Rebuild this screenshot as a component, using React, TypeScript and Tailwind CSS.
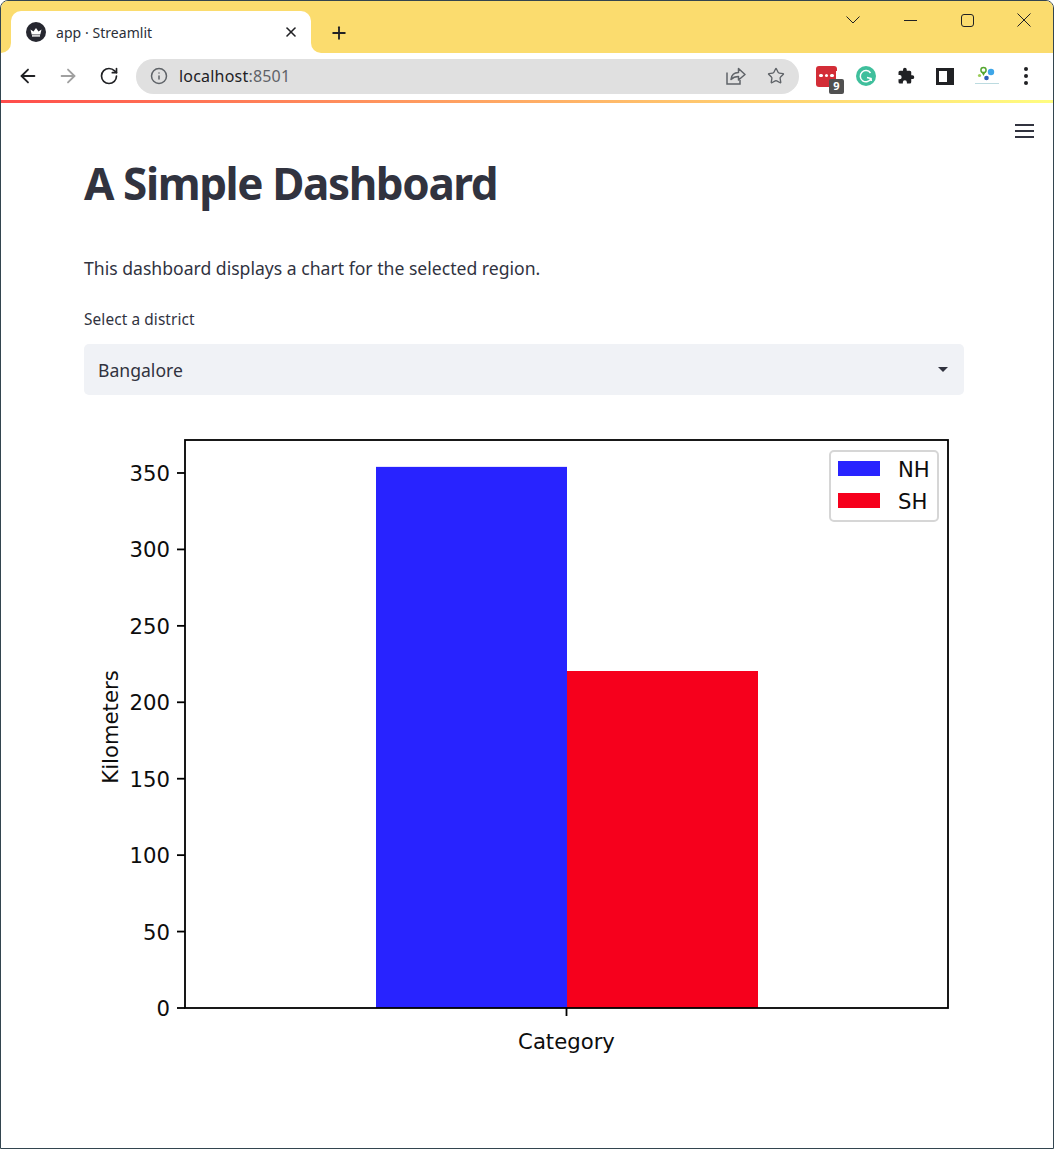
import { ArrowLeft, ArrowRight, RotateCw, Info, Star, X, Plus } from "lucide-react";

const TICKS = [0, 50, 100, 150, 200, 250, 300, 350];
const PLOT = { left: 185, right: 948, top: 440, bottom: 1008 };
const PX_PER_KM = 1.5286;

const yFor = (km: number) => PLOT.bottom - km * PX_PER_KM;

function CrownIcon() {
  return (
    <svg width="20" height="20" viewBox="0 0 20 20">
      <circle cx="10" cy="10" r="10" fill="#262730" />
      <path d="M4.5 7.5 L7.5 9.5 L10 6 L12.5 9.5 L15.5 7.5 L14.3 12.6 H5.7 Z" fill="#fff" />
      <rect x="6" y="13.2" width="8" height="1.4" fill="#fff" />
    </svg>
  );
}

function TabStrip() {
  return (
    <div className="flex h-[52px] bg-[#fbdc6e] shrink-0">
      <div className="relative ml-[10px] mt-[10px] flex h-[42px] w-[300px] items-center rounded-t-[10px] bg-white pl-[15px] pr-[12px]">
        <span className="absolute bottom-0 left-[-10px] h-[10px] w-[10px] bg-white">
          <span className="block h-full w-full rounded-br-[10px] bg-[#fbdc6e]" />
        </span>
        <span className="absolute bottom-0 right-[-10px] h-[10px] w-[10px] bg-white">
          <span className="block h-full w-full rounded-bl-[10px] bg-[#fbdc6e]" />
        </span>
        <CrownIcon />
        <span className="ml-[10px] flex-1 text-[14px] tracking-[0.05px] text-[#2b2f38] font-['Noto_Sans',sans-serif]">app · Streamlit</span>
        <X size={16} strokeWidth={2.4} className="text-[#202124]" />
      </div>
      <div className="ml-[18px] mt-[11px] flex h-[42px] items-center">
        <Plus size={20} strokeWidth={2.2} className="text-[#202124]" />
      </div>
      <div className="flex-1" />
      <div className="flex h-[38px] items-center text-[#202124]">
        <svg width="14" height="8" viewBox="0 0 14 8" className="mr-[44px]">
          <path d="M0.5 0.5 L7 7 L13.5 0.5" fill="none" stroke="#202124" strokeWidth="1" />
        </svg>
        <div className="mr-[44px] h-px w-[13px] bg-[#202124]" />
        <div className="mr-[43px] h-[13px] w-[13px] rounded-[3px] border border-[#202124]" />
        <svg width="14" height="14" viewBox="0 0 14 14" className="mr-[22px]">
          <path d="M0.5 0.5 L13.5 13.5 M13.5 0.5 L0.5 13.5" stroke="#202124" strokeWidth="1" />
        </svg>
      </div>
    </div>
  );
}

function ShareIcon() {
  return (
    <svg width="20" height="18" viewBox="0 0 20 18" fill="none" stroke="#5f6368" strokeWidth="1.5">
      <path d="M1 5.5 V17 H14 V13" />
      <path d="M5 12.5 C5.5 8 8.5 5.5 12.5 5.5 V1.5 L19 7.5 L12.5 13 V9.5 C9.5 9.5 7 10.3 5 12.5 Z" strokeLinejoin="round" />
    </svg>
  );
}

function LastPassIcon() {
  return (
    <div className="relative h-[21px] w-[21px] rounded-[3px] bg-[#d32d37]">
      <div className="flex h-full items-center gap-[2px] pl-[3px] pb-[1px]">
        <span className="h-[3.5px] w-[3.5px] rounded-full bg-white" />
        <span className="h-[3.5px] w-[3.5px] rounded-full bg-white" />
        <span className="h-[3.5px] w-[3.5px] rounded-full bg-white" />
        <span className="h-[9px] w-px bg-white" />
      </div>
      <span className="absolute left-[13px] top-[13px] flex h-[15px] w-[15px] items-center justify-center rounded-[2px] bg-[#505050] text-[11px] font-bold text-white font-['Noto_Sans',sans-serif]">9</span>
    </div>
  );
}

function GrammarlyIcon() {
  return (
    <svg width="20" height="20" viewBox="0 0 20 20">
      <circle cx="10" cy="10" r="10" fill="#3fbf9c" />
      <path d="M14.5 7 A5.6 5.6 0 1 0 15 12.5 L11 11.5 M15 12.5 L15.4 15" fill="none" stroke="#fff" strokeWidth="1.5" />
    </svg>
  );
}

function PuzzleIcon() {
  return (
    <svg width="18" height="18" viewBox="0 0 24 24">
      <path
        d="M20.5 11H19V7a2 2 0 0 0-2-2h-4V3.5a2.5 2.5 0 0 0-5 0V5H4a2 2 0 0 0-2 2v3.8h1.5a2.7 2.7 0 0 1 0 5.4H2V20a2 2 0 0 0 2 2h3.8v-1.5a2.7 2.7 0 0 1 5.4 0V22H17a2 2 0 0 0 2-2v-4h1.5a2.5 2.5 0 0 0 0-5z"
        fill="#202124"
      />
    </svg>
  );
}

function TinyLogo() {
  return (
    <svg width="26" height="22" viewBox="0 0 26 22">
      <circle cx="9.5" cy="5" r="2.6" fill="none" stroke="#55a630" strokeWidth="1.5" />
      <path d="M7.4 7 L9.5 11 L11.6 7" fill="#55a630" />
      <circle cx="17" cy="7" r="3.2" fill="#3ea6e8" />
      <circle cx="5.5" cy="10.5" r="1.6" fill="#9ccc5a" />
      <circle cx="12.5" cy="13" r="2.3" fill="#2f5fb8" />
      <rect x="1" y="18" width="24" height="1" fill="#bcdbe0" />
    </svg>
  );
}

function Toolbar() {
  return (
    <div className="flex h-[47px] shrink-0 items-center bg-white pb-[1px]">
      <ArrowLeft size={22} strokeWidth={2} className="ml-[16px] text-[#202124]" />
      <ArrowRight size={22} strokeWidth={2} className="ml-[18px] text-[#a0a0a0]" />
      <RotateCw size={20} strokeWidth={2} className="ml-[20px] text-[#202124]" />
      <div className="ml-[17px] flex h-[35px] w-[663px] items-center rounded-full bg-[#e0e0e0] pl-[14px] pr-[14px]">
        <Info size={18} strokeWidth={2} className="text-[#5f6368]" />
        <span className="ml-[11px] flex-1 text-[16px] tracking-[0.2px] font-['Noto_Sans',sans-serif] text-[#202124]">
          localhost<span className="text-[#5f6368]">:8501</span>
        </span>
        <ShareIcon />
        <Star size={18} strokeWidth={1.8} className="ml-[21px] text-[#5f6368]" />
      </div>
      <div className="ml-[17px]">
        <LastPassIcon />
      </div>
      <div className="ml-[19px]">
        <GrammarlyIcon />
      </div>
      <div className="ml-[21px]">
        <PuzzleIcon />
      </div>
      <div className="ml-[21px] flex h-[17px] w-[18px] justify-end border-[3px] border-[#202124] bg-white">
        <span className="h-full w-[4px] bg-[#202124]" />
      </div>
      <div className="ml-[20px]">
        <TinyLogo />
      </div>
      <div className="ml-[24px] flex flex-col gap-[3.5px]">
        <span className="h-[3.5px] w-[3.5px] rounded-full bg-[#202124]" />
        <span className="h-[3.5px] w-[3.5px] rounded-full bg-[#202124]" />
        <span className="h-[3.5px] w-[3.5px] rounded-full bg-[#202124]" />
      </div>
    </div>
  );
}

function Chart() {
  const text = "#0d0d0d";
  return (
    <svg width="880" height="650" viewBox="84 425 880 650" className="mt-[30px] block" fontFamily="'DejaVu Sans', sans-serif" fontSize="21.2">
      <rect x="376" y={yFor(354)} width="191" height={PLOT.bottom - yFor(354)} fill="#2823ff" />
      <rect x="567" y="671" width="191" height={PLOT.bottom - 671} fill="#f6001c" />
      <rect x={PLOT.left} y={PLOT.top} width={PLOT.right - PLOT.left} height={PLOT.bottom - PLOT.top} fill="none" stroke="#000" strokeWidth="1.8" />
      {TICKS.map((t) => (
        <g key={t}>
          <line x1={PLOT.left - 8} x2={PLOT.left} y1={yFor(t)} y2={yFor(t)} stroke="#000" strokeWidth="1.8" />
          <text x={PLOT.left - 15} y={yFor(t) + 8} textAnchor="end" fill={text}>
            {t}
          </text>
        </g>
      ))}
      <line x1="566.5" x2="566.5" y1={PLOT.bottom} y2={PLOT.bottom + 8} stroke="#000" strokeWidth="1.8" />
      <text x="566.5" y="1049" textAnchor="middle" fill={text}>
        Category
      </text>
      <text transform="translate(117.5 727) rotate(-90)" textAnchor="middle" fill={text}>
        Kilometers
      </text>
      <rect x="830" y="451" width="108" height="70" rx="4" fill="#fff" stroke="#d6d6d6" strokeWidth="2" />
      <rect x="838" y="461" width="42" height="15" fill="#2823ff" />
      <rect x="838" y="493" width="42" height="15" fill="#f6001c" />
      <text x="898" y="477" fill={text}>
        NH
      </text>
      <text x="898" y="509" fill={text}>
        SH
      </text>
    </svg>
  );
}

export default function App() {
  return (
    <div className="flex h-[1149px] w-[1054px] flex-col overflow-hidden rounded-t-[8px] border border-[#33454f] bg-white">
      <TabStrip />
      <Toolbar />
      <div className="h-[3px] shrink-0 bg-gradient-to-r from-[#ff4b4b] to-[#fffd80]" />
      <div className="pl-[83px] pr-[89px] text-[#31333f] font-['Noto_Sans',sans-serif]">
        <div className="mr-[-70px] flex h-[40px] flex-col items-end gap-[4px] pt-[21px]">
          <span className="h-[2px] w-[19px] bg-[#31333f]" />
          <span className="h-[2px] w-[19px] bg-[#31333f]" />
          <span className="h-[2px] w-[19px] bg-[#31333f]" />
        </div>
        <h1 className="mt-[12px] h-[56px] text-[44px] font-bold leading-[56px] tracking-[-1.4px]">A Simple Dashboard</h1>
        <p className="mt-[43px] h-[28px] text-[17.6px] leading-[28px]">This dashboard displays a chart for the selected region.</p>
        <label className="mt-[27px] block h-[20px] pt-[1px] text-[15.4px] leading-[20px] tracking-[0.1px]">Select a district</label>
        <div className="mt-[15px] flex h-[51px] items-center justify-between rounded-[5px] bg-[#f0f2f6] pl-[14px] pr-[16px]">
          <span className="pt-[1px] text-[17.6px] leading-[28px]">Bangalore</span>
          <span className="h-0 w-0 border-x-[5px] border-t-[5px] border-x-transparent border-t-[#31333f]" />
        </div>
        <Chart />
      </div>
    </div>
  );
}
